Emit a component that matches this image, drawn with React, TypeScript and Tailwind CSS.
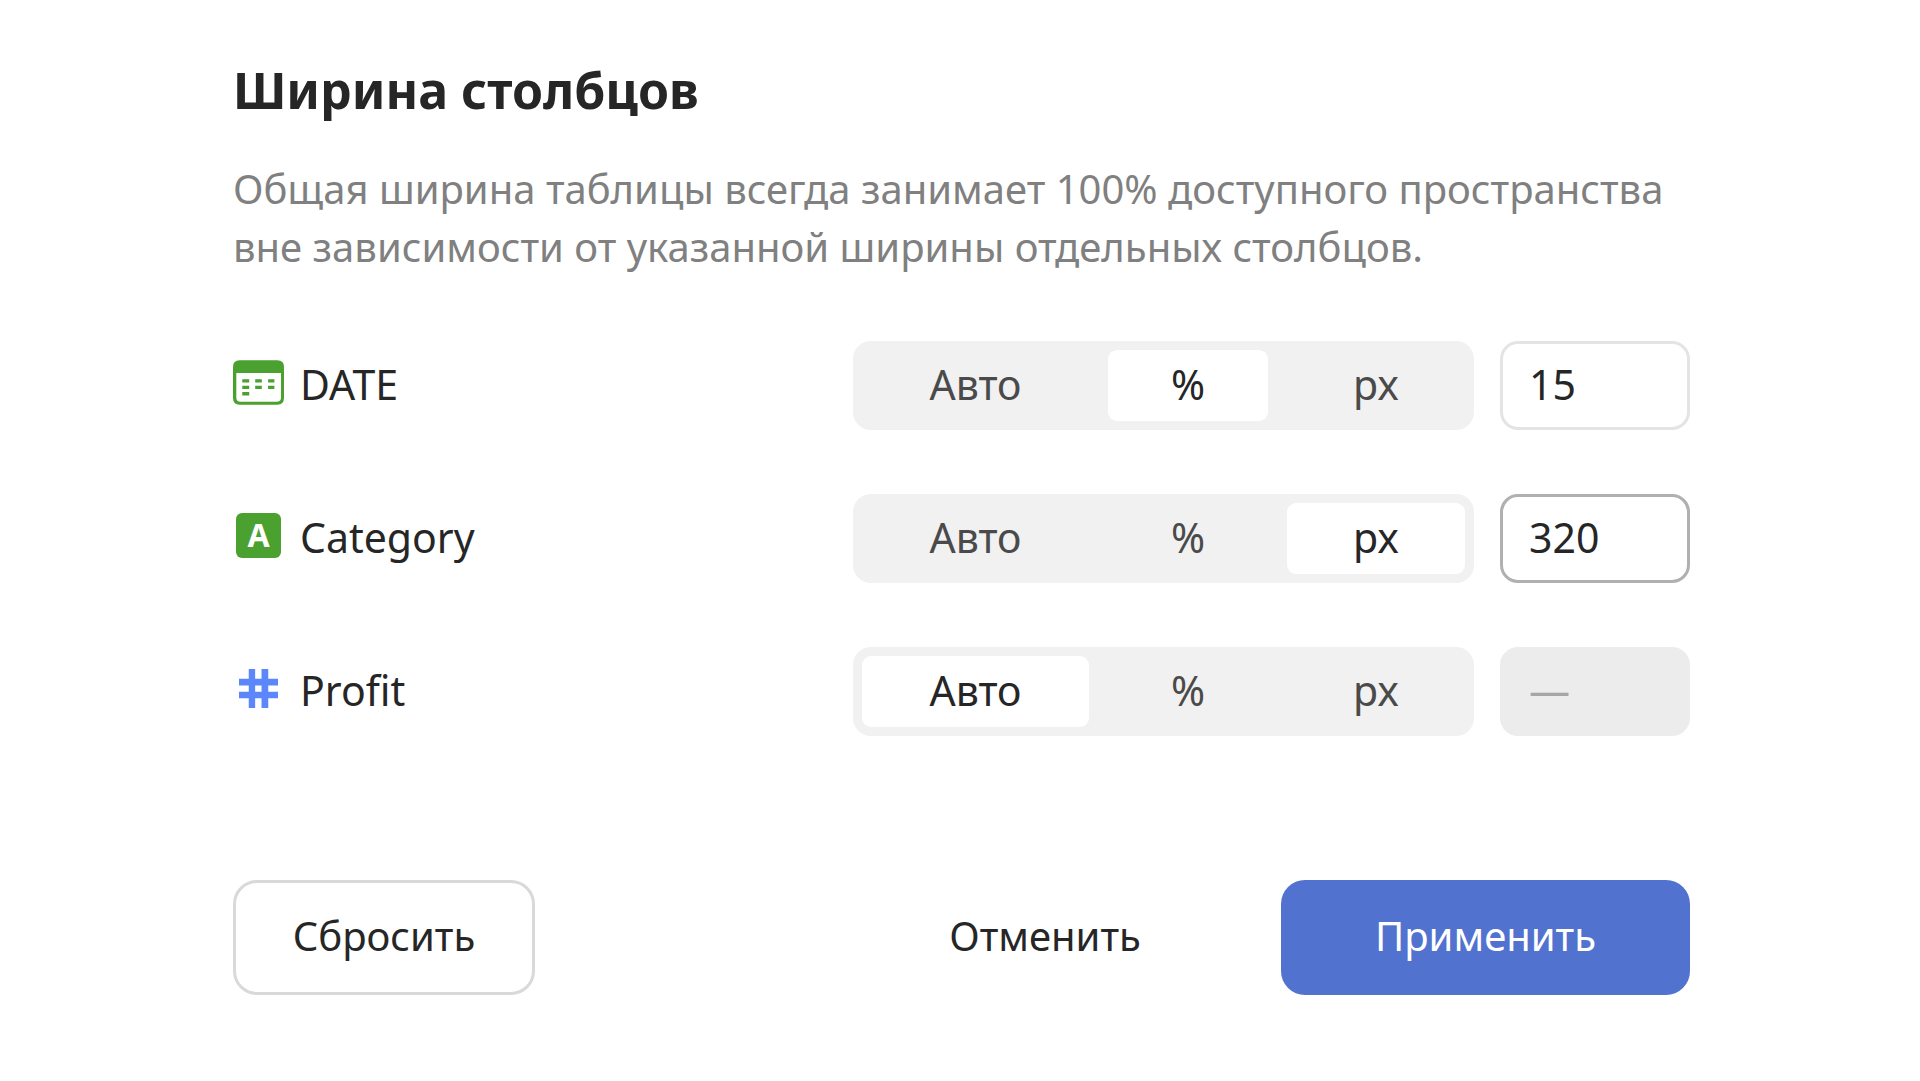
import { useState } from "react";

const units = [
	{ id: "auto", label: "Авто", width: "w-[227px]" },
	{ id: "percent", label: "%", width: "w-[160px]" },
	{ id: "px", label: "px", width: "w-[178px]" },
];

const columns = [
	{ name: "DATE", icon: <DateIcon />, unit: "percent", value: "15" },
	{ name: "Category", icon: <StringIcon />, unit: "px", value: "320" },
	{ name: "Profit", icon: <NumberIcon />, unit: "auto", value: "" },
];

function DateIcon() {
	return (
		<svg width="51" height="45" viewBox="0 0 154 134" fill="#4aa12f" aria-hidden="true">
			<path
				fillRule="evenodd"
				d="M20 0H134Q154 0 154 20V114Q154 134 134 134H20Q0 134 0 114V20Q0 0 20 0ZM10 38V112Q10 125 23 125H131Q145 125 145 112V38Z"
			/>
			<path d="M28 57h21v10H28zM67 57h20v10H67zM106 57h19v10h-19zM28 77h21v10H28zM67 77h20v10H67zM106 77h19v10h-19zM28 96h21v10H28z" />
		</svg>
	);
}

function StringIcon() {
	return (
		<svg width="45" height="45" viewBox="0 0 45 45" aria-hidden="true">
			<rect width="45" height="45" rx="6" fill="#4aa12f" />
			<text x="22.5" y="33.5" textAnchor="middle" fontSize="32" fontWeight="700" fill="#fff">
				A
			</text>
		</svg>
	);
}

function NumberIcon() {
	return (
		<svg width="39" height="39" viewBox="0 0 116 116" fill="#5c87fa" aria-hidden="true">
			<path d="M29 0h19v116H29zM67 0h20v116H67zM0 29h116v20H0zM0 68h116v19H0z" />
		</svg>
	);
}

type ColumnProps = (typeof columns)[number];

function ColumnRow({ name, icon, unit: initialUnit, value: initialValue }: ColumnProps) {
	const [unit, setUnit] = useState(initialUnit);
	const [value, setValue] = useState(initialValue);
	const auto = unit === "auto";

	return (
		<li className="flex items-center">
			<div className="flex flex-1 items-center gap-4">
				<span className="flex w-[51px] justify-center pb-[7px]">{icon}</span>
				<span className="pb-[3px]">{name}</span>
			</div>
			<div role="radiogroup" aria-label={name} className="flex h-[89px] gap-[19px] rounded-[18px] bg-[#f1f1f1] p-[9px]">
				{units.map(({ id, label, width }) => (
					<label
						key={id}
						className={`${width} relative flex cursor-pointer items-center justify-center rounded-[9px] pb-[3px] ${
							unit === id ? "bg-white text-[#262626]" : "text-[#4a4a4a]"
						}`}
					>
						<input
							type="radio"
							name={`unit-${name}`}
							className="sr-only"
							checked={unit === id}
							onChange={() => setUnit(id)}
						/>
						{label}
					</label>
				))}
			</div>
			<input
				type="text"
				aria-label={`Ширина ${name}`}
				disabled={auto}
				value={auto ? "—" : value}
				onChange={(e) => setValue(e.target.value)}
				className={`ml-[26px] h-[89px] w-[190px] rounded-[18px] border-3 px-[26px] pb-[3px] outline-none ${
					auto
						? "border-[#ececec] bg-[#ececec] text-[#a6a6a6]"
						: unit === "px"
							? "border-[#b0b0b0] bg-white"
							: "border-[#e4e4e4] bg-white"
				}`}
			/>
		</li>
	);
}

export default function App() {
	return (
		<main className="min-h-screen bg-white pt-[50px] pr-[230px] pl-[233px] font-['Noto_Sans',sans-serif] text-[41px] leading-[58px] text-[#262626]">
			<h1 className="text-[50px] leading-[80px] font-bold">Ширина столбцов</h1>
			<p className="mt-[30px] text-[40px] text-[#808080]">
				Общая ширина таблицы всегда занимает 100% доступного пространства вне зависимости от указанной ширины отдельных столбцов.
			</p>
			<ul className="mt-[65px] flex flex-col gap-16">
				{columns.map((column) => (
					<ColumnRow key={column.name} {...column} />
				))}
			</ul>
			<div className="mt-36 flex items-center text-[40px]">
				<button type="button" className="h-[115px] w-[302px] rounded-3xl border-3 border-[#d9d9d9] pb-1">
					Сбросить
				</button>
				<button type="button" className="mr-[84px] ml-auto h-[115px] w-[304px] rounded-3xl pb-1">
					Отменить
				</button>
				<button type="button" className="h-[115px] w-[409px] rounded-3xl bg-[#5172cf] pb-1 text-white">
					Применить
				</button>
			</div>
		</main>
	);
}
